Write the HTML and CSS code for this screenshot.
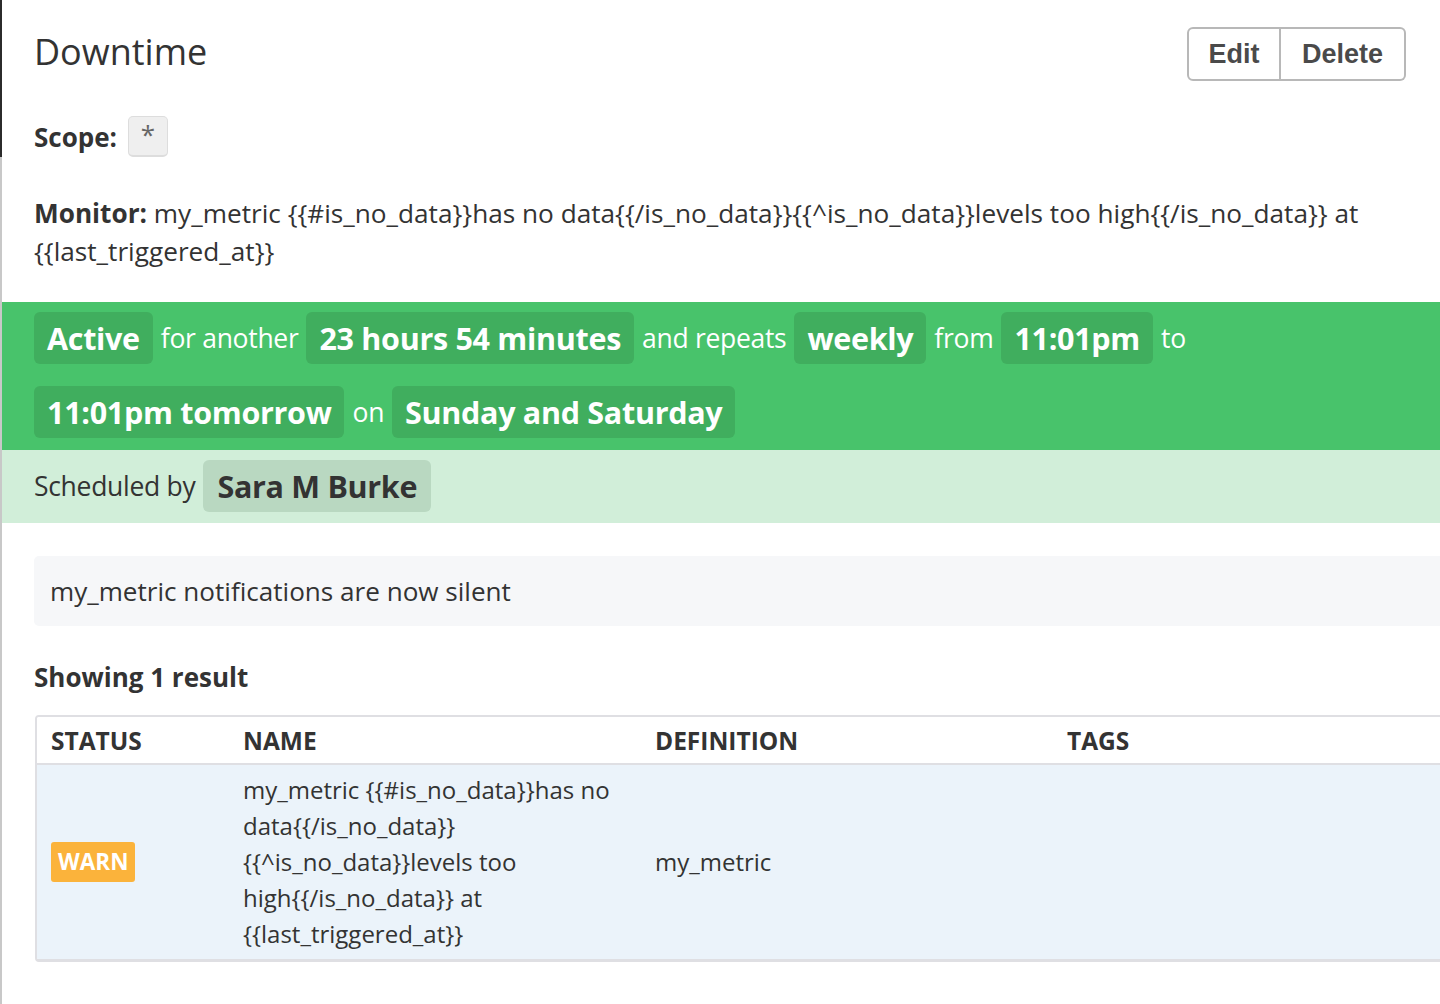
FILE: index.html
```html
<!DOCTYPE html>
<html>
<head>
<meta charset="utf-8">
<link rel="stylesheet" href="styles.css">
</head>
<body>
<div class="page">
  <div class="edge"></div>
  <main class="main">
    <header class="header">
      <h1 class="title">Downtime</h1>
      <div class="btn-group">
        <button class="btn">Edit</button>
        <button class="btn">Delete</button>
      </div>
    </header>
    <div class="scope">
      <span class="label">Scope:</span>
      <span class="scope-chip">*</span>
    </div>
    <p class="monitor"><b class="mon-label">Monitor: </b>my_metric {{#is_no_data}}has no data{{/is_no_data}}{{^is_no_data}}levels too high{{/is_no_data}} at {{last_triggered_at}}</p>

    <section class="status-band">
      <div class="status-row">
        <span class="chip">Active</span>
        <span class="word">for another</span>
        <span class="chip">23 hours 54 minutes</span>
        <span class="word">and repeats</span>
        <span class="chip">weekly</span>
        <span class="word">from</span>
        <span class="chip">11:01pm</span>
        <span class="word">to</span>
      </div>
      <div class="status-row">
        <span class="chip">11:01pm tomorrow</span>
        <span class="word">on</span>
        <span class="chip">Sunday and Saturday</span>
      </div>
    </section>
    <section class="sched-band">
      <span class="word">Scheduled by</span>
      <span class="chip chip-user">Sara M Burke</span>
    </section>

    <div class="note">my_metric notifications are now silent</div>

    <h2 class="results">Showing 1 result</h2>

    <div class="table">
      <div class="thead">
        <div class="cell c-status">STATUS</div>
        <div class="cell c-name">NAME</div>
        <div class="cell c-def">DEFINITION</div>
        <div class="cell c-tags">TAGS</div>
      </div>
      <div class="trow">
        <div class="cell c-status"><span class="warn">WARN</span></div>
        <div class="cell c-name">my_metric {{#is_no_data}}has no data{{/is_no_data}} {{^is_no_data}}levels too high{{/is_no_data}} at {{last_triggered_at}}</div>
        <div class="cell c-def">my_metric</div>
        <div class="cell c-tags"></div>
      </div>
    </div>
  </main>
</div>
</body>
</html>
```

FILE: styles.css
```css
* { box-sizing: border-box; }
html, body { margin: 0; padding: 0; background: #fff; overflow-x: hidden; }
body {
  font-family: "Open Sans", "Noto Sans", sans-serif;
  color: #333;
}
.page { display: flex; min-height: 1004px; }
.edge {
  width: 2px;
  flex: 0 0 2px;
  background: linear-gradient(to bottom, #2b2b2b 0, #2b2b2b 157px, #c8c8c8 157px, #c8c8c8 100%);
}
.main { flex: 1; min-width: 0; }

.header {
  display: flex;
  justify-content: space-between;
  align-items: flex-start;
  padding: 27px 34px 0 32px;
}
.title {
  margin: 2px 0 0;
  font-size: 36px;
  font-weight: 400;
  color: #333;
  line-height: 46px;
}
.btn-group { display: flex; }
.btn {
  font-family: "Liberation Sans", Arial, sans-serif;
  font-weight: 700;
  font-size: 27px;
  color: #4a4a4a;
  background: #fff;
  border: 2px solid #b8b8b8;
  height: 54px;
  padding: 0;
}
.btn:first-child { border-radius: 6px 0 0 6px; width: 94px; }
.btn:last-child { border-radius: 0 6px 6px 0; border-left: 0; width: 125px; }

.scope {
  display: flex;
  align-items: center;
  gap: 11px;
  padding: 35px 32px 0;
}
.label { font-weight: 700; font-size: 26px; }
.scope-chip {
  display: inline-flex;
  justify-content: center;
  width: 40px;
  height: 41px;
  background: #efefef;
  border: 1px solid #ddd;
  border-bottom-width: 2px;
  border-radius: 5px;
  color: #666;
  font-size: 26px;
  line-height: 34px;
}
.monitor {
  margin: 37px 0 0;
  padding: 0 60px 0 32px;
  font-size: 26.2px;
  line-height: 38px;
}
.mon-label { font-weight: 700; }

.status-band {
  margin-top: 32px;
  background: #48c36b;
  padding: 10px 32px 12px;
  display: flex;
  flex-direction: column;
  gap: 22px;
}
.status-row, .sched-band {
  display: flex;
  align-items: center;
  gap: 8px;
}
.chip {
  display: inline-block;
  background: #40ae5e;
  color: #fff;
  font-weight: 700;
  font-size: 30.5px;
  line-height: 52px;
  height: 52px;
  padding: 0 13px;
  border-radius: 6px;
  letter-spacing: -0.3px;
}
.word { color: #fff; font-size: 26.5px; letter-spacing: -0.3px; }
.sched-band {
  background: #d1eed9;
  padding: 10px 32px 11px;
}
.sched-band .word { color: #333; }
.chip-user { background: #b9d8c1; color: #333; padding: 0 14px; }

.note {
  margin: 33px -20px 0 32px;
  background: #f6f7f9;
  border-radius: 5px;
  height: 70px;
  padding: 0 16px;
  display: flex;
  align-items: center;
  font-size: 26.1px;
}
.results {
  margin: 33px 0 0 32px;
  font-size: 26px;
  font-weight: 700;
  line-height: 36px;
}
.table {
  margin: 20px -20px 0 33px;
  border: 2px solid #dfdfe3;
  border-bottom-width: 3px;
  border-radius: 4px;
  overflow: hidden;
}
.thead, .trow { display: flex; }
.thead {
  height: 48px;
  align-items: center;
  border-bottom: 2px solid #dfdfe3;
  font-weight: 700;
  font-size: 24.5px;
  background: #fff;
}
.trow {
  background: #ebf3fa;
  align-items: center;
  font-size: 24px;
  line-height: 36px;
  height: 194px;
}
.cell { padding: 0 14px; }
.c-status { width: 192px; flex: 0 0 192px; }
.c-name { width: 412px; flex: 0 0 412px; padding-right: 10px; }
.c-def { width: 412px; flex: 0 0 412px; }
.c-tags { flex: 1; }
.warn {
  display: inline-block;
  background: #fbb33b;
  color: #fff;
  font-weight: 700;
  font-size: 22.5px;
  line-height: 40px;
  height: 40px;
  padding: 0 7px;
  border-radius: 3px;
}
```
